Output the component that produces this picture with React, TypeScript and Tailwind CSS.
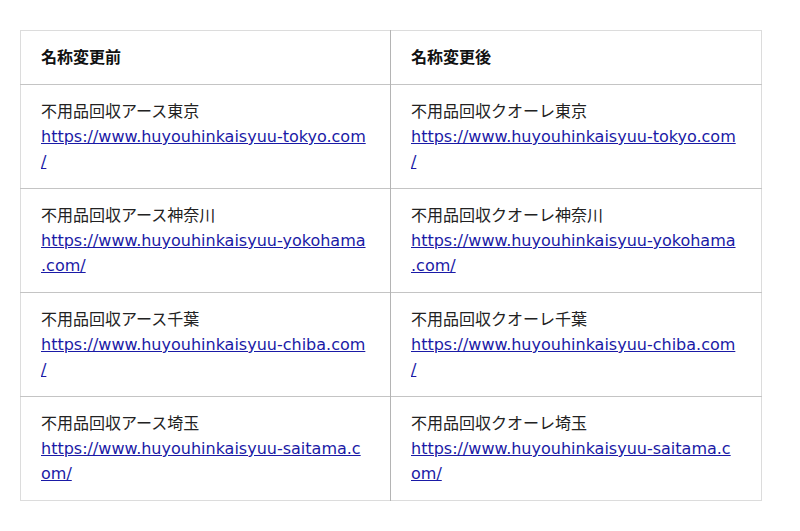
const rows = [
  {
    before: "不用品回収アース東京",
    after: "不用品回収クオーレ東京",
    url: "https://www.huyouhinkaisyuu-tokyo.com/",
  },
  {
    before: "不用品回収アース神奈川",
    after: "不用品回収クオーレ神奈川",
    url: "https://www.huyouhinkaisyuu-yokohama.com/",
  },
  {
    before: "不用品回収アース千葉",
    after: "不用品回収クオーレ千葉",
    url: "https://www.huyouhinkaisyuu-chiba.com/",
  },
  {
    before: "不用品回収アース埼玉",
    after: "不用品回収クオーレ埼玉",
    url: "https://www.huyouhinkaisyuu-saitama.com/",
  },
];

function Cell({ name, url, last }: { name: string; url: string; last?: boolean }) {
  return (
    <td
      className={`border-t border-[#c4c4c4] px-5 py-[14px] align-top ${
        last ? "" : "border-r border-r-[#b4b4b4]"
      }`}
    >
      <div className="w-[326px]">
        <div>{name}</div>
        <a href={url} className="text-[#1a1aa6] underline [line-break:anywhere]">
          {url}
        </a>
      </div>
    </td>
  );
}

export default function App() {
  return (
    <div
      className="bg-white min-h-[531px] pt-[30px] pl-5 text-[16px] leading-[25px] text-[#222]"
      style={{ fontFamily: '"DejaVu Sans", "Noto Sans CJK JP", sans-serif' }}
    >
      <table className="w-[742px] table-fixed border-collapse border border-[#dcdcdc]">
        <colgroup>
          <col className="w-[370px]" />
          <col />
        </colgroup>
        <thead>
          <tr>
            <th className="border-r border-[#b4b4b4] px-5 py-[14px] text-left text-[16px] font-bold text-[#111]">
              名称変更前
            </th>
            <th className="px-5 py-[14px] text-left text-[16px] font-bold text-[#111]">
              名称変更後
            </th>
          </tr>
        </thead>
        <tbody>
          {rows.map((r) => (
            <tr key={r.url}>
              <Cell name={r.before} url={r.url} />
              <Cell name={r.after} url={r.url} last />
            </tr>
          ))}
        </tbody>
      </table>
    </div>
  );
}
